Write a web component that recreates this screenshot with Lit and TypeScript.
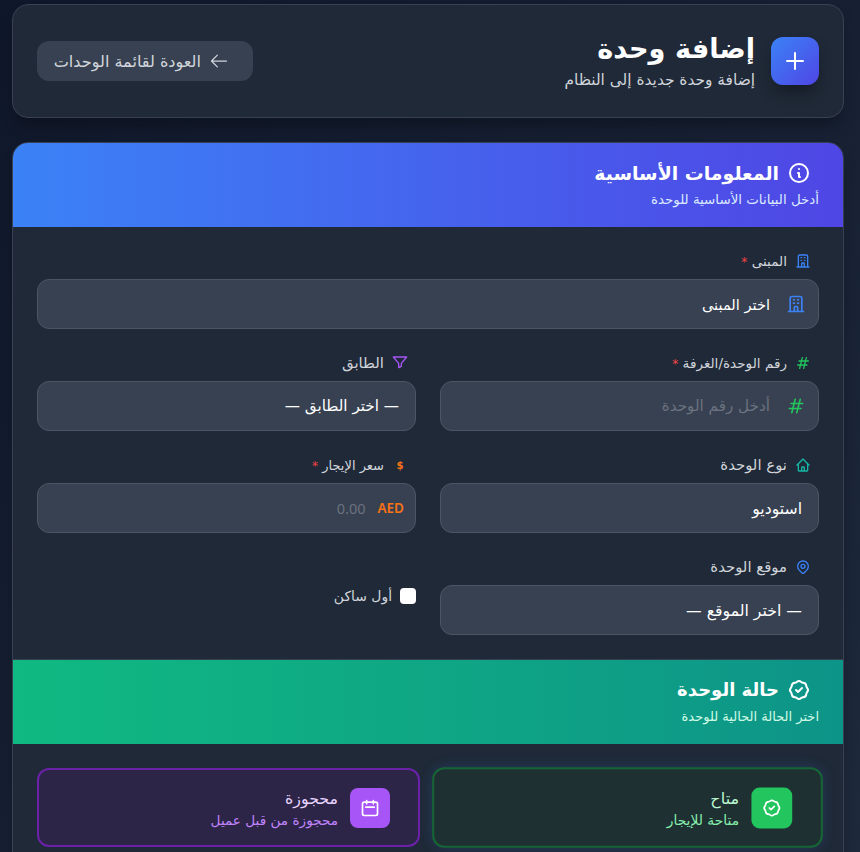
import { LitElement, html, css, svg } from "lit";
import { customElement } from "lit/decorators.js";

const ic = (d: string, cls: string, sw = 2) => html`<svg class=${cls} viewBox="0 0 24 24" fill="none" stroke="currentColor" stroke-width=${sw} stroke-linecap="round" stroke-linejoin="round">${svg`<path d=${d}></path>`}</svg>`;

const P = {
  plus: "M12 4v16m8-8H4",
  arrow: "M10 19l-7-7m0 0l7-7m-7 7h18",
  info: "M13 16h-1v-4h-1m1-4h.01M21 12a9 9 0 11-18 0 9 9 0 0118 0z",
  building: "M19 21V5a2 2 0 00-2-2H7a2 2 0 00-2 2v16m14 0h2m-2 0h-5m-9 0H3m2 0h5M9 7h1m-1 4h1m4-4h1m-1 4h1m-5 10v-5a1 1 0 011-1h2a1 1 0 011 1v5m-4 0h4",
  hash: "M7 20l4-16m2 16l4-16M6 9h14M4 15h14",
  filter: "M22 3H2l8 9.46V19l4-2v-4.54L22 3z",
  home: "M3 12l2-2m0 0l7-7 7 7M5 10v10a1 1 0 001 1h3m10-11l2 2m-2-2v10a1 1 0 01-1 1h-3m-6 0a1 1 0 001-1v-4a1 1 0 011-1h2a1 1 0 011 1v4a1 1 0 001 1m-6 0h6",
  pin: "M17.657 16.657L13.414 20.9a1.998 1.998 0 01-2.827 0l-4.244-4.243a8 8 0 1111.314 0zM15 11a3 3 0 11-6 0 3 3 0 016 0z",
  badge: "M9 12l2 2 4-4M7.835 4.697a3.42 3.42 0 001.946-.806 3.42 3.42 0 014.438 0 3.42 3.42 0 001.946.806 3.42 3.42 0 013.138 3.138 3.42 3.42 0 00.806 1.946 3.42 3.42 0 010 4.438 3.42 3.42 0 00-.806 1.946 3.42 3.42 0 01-3.138 3.138 3.42 3.42 0 00-1.946.806 3.42 3.42 0 01-4.438 0 3.42 3.42 0 00-1.946-.806 3.42 3.42 0 01-3.138-3.138 3.42 3.42 0 00-.806-1.946 3.42 3.42 0 010-4.438 3.42 3.42 0 00.806-1.946 3.42 3.42 0 013.138-3.138z",
  cal: "M8 7V3m8 4V3m-9 8h10M5 21h14a2 2 0 002-2V7a2 2 0 00-2-2H5a2 2 0 00-2 2v12a2 2 0 002 2z",
};

@customElement("app-root")
export class AppRoot extends LitElement {
  static styles = css`
    :host {
      display: block;
      height: 852px;
      overflow: hidden;
      background: linear-gradient(135deg, #0f172a, #1e293b);
      font-family: "DejaVu Sans", sans-serif;
    }
    .page { direction: rtl; padding: 4px 16px 0 12px; display: flex; flex-direction: column; gap: 24px; }
    .top {
      height: 114px; box-sizing: border-box; background: #1f2937; border: 1px solid #374151; border-radius: 16px;
      padding: 0 24px; display: flex; align-items: center; justify-content: space-between;
      box-shadow: 0 10px 15px -3px rgba(0,0,0,.3);
    }
    .brand { display: flex; align-items: center; gap: 16px; }
    .logo {
      width: 48px; height: 48px; border-radius: 12px; display: flex; align-items: center; justify-content: center;
      background: linear-gradient(135deg, #3b82f6, #4f46e5); color: #fff; box-shadow: 0 10px 15px -3px rgba(0,0,0,.35);
    }
    .logo svg { width: 24px; height: 24px; }
    h1 { margin: 0; font-size: 27.2px; line-height: 38px; font-weight: 700; color: #fff; white-space: nowrap; }
    .sub { font-size: 15.4px; line-height: 24px; color: #d1d5db; white-space: nowrap; }
    .back {
      width: 216px; height: 40px; box-sizing: border-box; padding: 0 24px 0 8px; border-radius: 12px; background: #374151; color: #d1d5db;
      display: flex; align-items: center; gap: 8px; font-size: 16.1px; white-space: nowrap;
    }
    .back svg { width: 20px; height: 20px; flex: none; }
    .card { background: #1f2937; border: 1px solid #374151; border-radius: 16px; overflow: hidden; box-shadow: 0 10px 15px -3px rgba(0,0,0,.3); }
    .head { height: 84px; box-sizing: border-box; padding: 16px 24px 0; color: #fff; }
    .head.blue { background: linear-gradient(90deg, #3b82f6, #4f46e5); }
    .head.green { background: linear-gradient(90deg, #10b981, #0d9488); height: 85px; border-top: 1px solid #374151; }
    .head h2 { margin: 0 8px 0 0; display: flex; align-items: center; gap: 8px; font-size: 18.9px; line-height: 28px; font-weight: 700; white-space: nowrap; }
    .head.green h2 { font-size: 18px; }
    .head h2 svg { width: 24px; height: 24px; flex: none; }
    .head p { margin: 3px 0 0; font-size: 13.4px; line-height: 20px; white-space: nowrap; }
    .head.blue p { color: #dbeafe; }
    .head.green p { color: #d1fae5; font-size: 13px; }
    .form { padding: 24px; display: grid; grid-template-columns: 1fr 1fr; column-gap: 24px; row-gap: 24px; }
    .full { grid-column: 1 / -1; }
    .lab {
      height: 20px; margin: 0 8px 8px 0; display: flex; align-items: center; gap: 8px; color: #d1d5db; font-size: 14.9px; white-space: nowrap;
    }
    .lab.narrow { font-size: 13.6px; }
    .lab.narrower { font-size: 13px; }
    .lab svg { width: 16px; height: 16px; flex: none; }
    .req { color: #ef4444; font-size: 12px; }
    .blue-i { color: #3b82f6; } .green-i { color: #22c55e; } .purple-i { color: #a855f7; }
    .teal-i { color: #14b8a6; }
    .dollar { width: 16px; flex: none; text-align: center; font-size: 10px; font-weight: 700; color: #f97316; }
    .inp {
      height: 50px; box-sizing: border-box; background: #374151; border: 1px solid #4b5563; border-radius: 12px;
      padding: 0 16px; display: flex; align-items: center; color: #fff; font-size: 15.7px; white-space: nowrap;
    }
    .inp.tight { font-size: 15.2px; }
    .inp.tighter { font-size: 14.6px; }
    .inp.icon { padding-right: 12px; gap: 16px; }
    .inp svg { width: 20px; height: 20px; flex: none; }
    .inp.ph { color: #6b7280; }
    .inp.money { padding-right: 11px; gap: 12px; }
    .aed { color: #f97316; font: 600 13.5px "Noto Sans", sans-serif; direction: ltr; }
    .zero { color: #6b7280; font: 400 14.5px "Noto Sans", sans-serif; }
    .first { display: flex; align-items: center; gap: 8px; color: #d1d5db; font-size: 13.9px; height: 22px; align-self: center; white-space: nowrap; }
    .box { width: 16px; height: 16px; border-radius: 4px; background: #fff; flex: none; }
    .status { padding: 24px; display: grid; grid-template-columns: 1fr 1fr; gap: 16px; }
    .opt {
      height: 79px; box-sizing: border-box; border: 2px solid; border-radius: 12px; padding: 0 28px; display: flex; align-items: center; gap: 12px; white-space: nowrap;
    }
    .opt.on { border-color: #166534; background: #1f3033; transform: scale(1.02); box-shadow: 0 0 12px rgba(59,130,246,.2); }
    .opt.res { border-color: #6b21a8; background: #2d2548; }
    .sq { width: 40px; height: 40px; border-radius: 8px; display: flex; align-items: center; justify-content: center; color: #fff; flex: none; }
    .on .sq { background: #22c55e; } .res .sq { background: #a855f7; }
    .sq svg { width: 20px; height: 20px; }
    .txt { padding-top: 2px; }
    .t { font-size: 15.8px; line-height: 22px; } .d { font-size: 13.6px; line-height: 20px; }
    .on .t { color: #bbf7d0; } .on .d { color: #86efac; }
    .res .t { color: #e9d5ff; } .res .d { color: #c084fc; }
  `;

  render() {
    return html`<div class="page">
      <header class="top">
        <div class="brand">
          <div class="logo">${ic(P.plus, "")}</div>
          <div><h1>إضافة وحدة</h1><div class="sub">إضافة وحدة جديدة إلى النظام</div></div>
        </div>
        <div class="back">${ic(P.arrow, "", 1.5)}<span>العودة لقائمة الوحدات</span></div>
      </header>
      <section class="card">
        <div class="head blue">
          <h2>${ic(P.info, "")}<span>المعلومات الأساسية</span></h2>
          <p>أدخل البيانات الأساسية للوحدة</p>
        </div>
        <div class="form">
          <div class="full">
            <div class="lab narrow">${ic(P.building, "blue-i")}<span>المبنى <span class="req">*</span></span></div>
            <div class="inp icon tighter">${ic(P.building, "blue-i")}<span>اختر المبنى</span></div>
          </div>
          <div>
            <div class="lab narrow">${ic(P.hash, "green-i")}<span>رقم الوحدة/الغرفة <span class="req">*</span></span></div>
            <div class="inp icon ph tight">${ic(P.hash, "green-i")}<span>أدخل رقم الوحدة</span></div>
          </div>
          <div>
            <div class="lab">${ic(P.filter, "purple-i")}<span>الطابق</span></div>
            <div class="inp tight">— اختر الطابق —</div>
          </div>
          <div>
            <div class="lab">${ic(P.home, "teal-i")}<span>نوع الوحدة</span></div>
            <div class="inp">استوديو</div>
          </div>
          <div>
            <div class="lab narrower"><span class="dollar">$</span><span>سعر الإيجار <span class="req">*</span></span></div>
            <div class="inp money"><span class="aed">AED</span><span class="zero">0.00</span></div>
          </div>
          <div>
            <div class="lab">${ic(P.pin, "blue-i")}<span>موقع الوحدة</span></div>
            <div class="inp">— اختر الموقع —</div>
          </div>
          <div class="first"><span class="box"></span><span>أول ساكن</span></div>
        </div>
        <div class="head green">
          <h2>${ic(P.badge, "")}<span>حالة الوحدة</span></h2>
          <p>اختر الحالة الحالية للوحدة</p>
        </div>
        <div class="status">
          <div class="opt on"><div class="sq">${ic(P.badge, "")}</div><div class="txt"><div class="t">متاح</div><div class="d">متاحة للإيجار</div></div></div>
          <div class="opt res"><div class="sq">${ic(P.cal, "")}</div><div class="txt"><div class="t">محجوزة</div><div class="d">محجوزة من قبل عميل</div></div></div>
        </div>
      </section>
    </div>`;
  }
}
